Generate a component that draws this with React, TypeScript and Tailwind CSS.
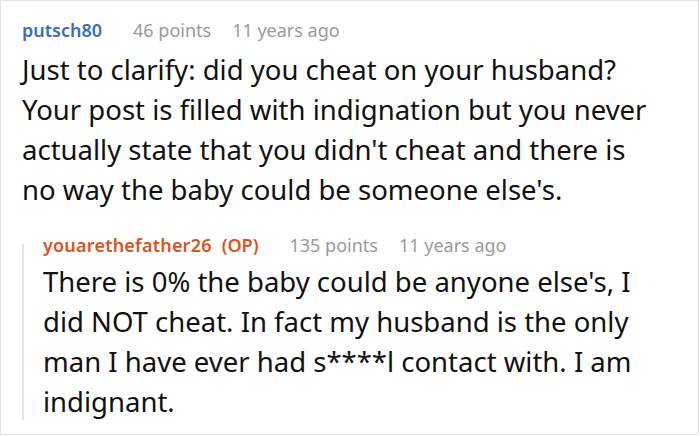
import React from "react";

type CommentMeta = {
  author: string;
  points: number;
  age: string;
  op?: boolean;
};

function MetaRow({ author, points, age, op }: CommentMeta) {
  return (
    <div className="flex items-baseline text-[18px] leading-[26px]">
      <span className={op ? "font-semibold text-[#d9541f] tracking-[0.2px]" : "font-semibold text-[#3c6cc4]"}>
        {author}
      </span>
      {op && <span className="ml-[10px] font-semibold text-[#d9541f]">(OP)</span>}
      <span className="ml-[31px] text-[#9a9a9a]">{points} points</span>
      <span className="ml-[21px] text-[#9a9a9a]">{age}</span>
    </div>
  );
}

// reference breaks lines at fixed points, so keep them as rows
function Body({ lines, className }: { lines: string[]; className?: string }) {
  return (
    <p className={"text-[27.5px] leading-[40px] " + (className ?? "")}>
      {lines.map((l) => (
        <span key={l} className="block whitespace-nowrap">
          {l}
        </span>
      ))}
    </p>
  );
}

export default function App() {
  return (
    <div
      className="w-[699px] h-[435px] border border-[#e2e2e2] bg-white text-[#111] overflow-hidden"
      style={{ fontFamily: '"Noto Sans", "Open Sans", sans-serif' }}
    >
      <div className="pl-[21px] pr-[20px] pt-4">
        <MetaRow author="putsch80" points={46} age="11 years ago" />
        <Body
          className="mt-[7px]"
          lines={[
            "Just to clarify: did you cheat on your husband?",
            "Your post is filled with indignation but you never",
            "actually state that you didn't cheat and there is",
            "no way the baby could be someone else's.",
          ]}
        />

        <div className="flex mt-[22px]">
          <div className="w-[2px] bg-[#e4e4e4] mt-[12px] mb-[2px] shrink-0" />
          <div className="pl-[19px] flex-1">
            <MetaRow
              author="youarethefather26"
              op
              points={135}
              age="11 years ago"
            />
            <Body
              className="mt-[4px]"
              lines={[
                "There is 0% the baby could be anyone else's, I",
                "did NOT cheat. In fact my husband is the only",
                "man I have ever had s****l contact with. I am",
                "indignant.",
              ]}
            />
          </div>
        </div>
      </div>
    </div>
  );
}
